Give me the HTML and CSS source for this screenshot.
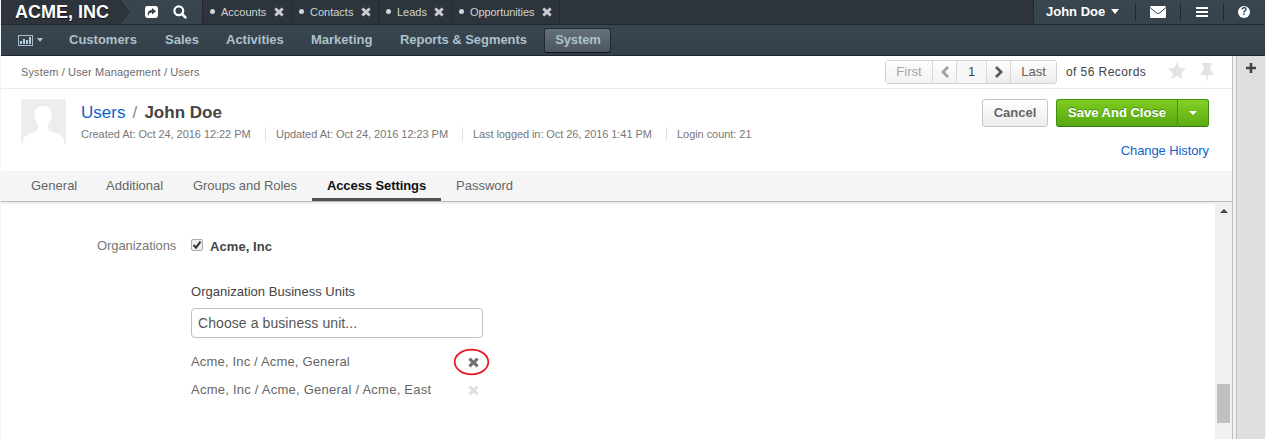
FILE: index.html
```html
<!DOCTYPE html>
<html lang="en">
<head>
<meta charset="utf-8">
<title>John Doe - Users</title>
<link rel="stylesheet" href="styles.css">
</head>
<body>
<svg class="defs" width="0" height="0">
  <symbol id="cross" viewBox="0 0 10 10"><path d="M2.3 0.4 5 3.1 7.7 0.4 9.7 2.4 7.1 5 9.7 7.6 7.7 9.6 5 6.9 2.3 9.6 0.3 7.6 2.9 5 0.3 2.4z" fill="currentColor"/></symbol>
</svg>
<div class="page">
  <header class="topbar">
    <div class="logo"><span>ACME, INC</span><svg class="logo-arrow" width="12" height="24" viewBox="0 0 12 24"><path d="M0 0H1L10 12 1 24H0z" fill="#2d343c"/><path d="M1 0 10 12 1 24" fill="none" stroke="#262d35"/></svg></div>
    <div class="tools">
      <svg class="share" width="13" height="12" viewBox="0 0 13 12"><rect width="13" height="12" rx="2.4" fill="#fff"/><path d="M3.2 10C1.8 6.2 4 4 7 4V2L11 5.3 7 8.4V6.4C5 6.4 3.6 7.4 3.2 10z" fill="#36424c"/></svg>
      <svg class="search" width="14" height="14" viewBox="0 0 14 14"><circle cx="5.8" cy="5.8" r="4.4" fill="none" stroke="#fff" stroke-width="2.2"/><path d="M9 9l3.4 3.4" stroke="#fff" stroke-width="2.6" stroke-linecap="round"/></svg>
    </div>
    <nav class="pins">
      <div class="pin pin-accounts"><i class="dot"></i><span>Accounts</span><svg width="10" height="10"><use href="#cross"/></svg></div>
      <div class="pin pin-contacts"><i class="dot"></i><span>Contacts</span><svg width="10" height="10"><use href="#cross"/></svg></div>
      <div class="pin pin-leads"><i class="dot"></i><span>Leads</span><svg width="10" height="10"><use href="#cross"/></svg></div>
      <div class="pin pin-opps"><i class="dot"></i><span>Opportunities</span><svg width="10" height="10"><use href="#cross"/></svg></div>
    </nav>
    <div class="user">
      <div class="user-name">John Doe<i class="caret"></i></div>
      <div class="user-tool mail"><svg width="16" height="12" viewBox="0 0 16 12"><rect width="16" height="12" rx="1" fill="#fff"/><path d="M0 1.5 6.5 7Q8 8 9.5 7L16 1.5" fill="none" stroke="#36424c"/></svg></div>
      <div class="user-tool menu"><svg width="12" height="10" viewBox="0 0 12 10"><path d="M0 1H12M0 5H12M0 9H12" stroke="#fff" stroke-width="2"/></svg></div>
      <div class="user-tool help"><i>?</i></div>
    </div>
  </header>

  <nav class="mainnav">
    <a class="dash"><svg width="15" height="11" viewBox="0 0 15 11"><rect x=".5" y=".5" width="14" height="10" fill="none" stroke="#adbac8"/><path d="M2 9V6h2v3zM5 9V4h2v5zM8 9V5h2v4zM11 9V2h2v7z" fill="#b5cfe0"/></svg><i class="caret"></i></a>
    <a class="n1">Customers</a><a class="n2">Sales</a><a class="n3">Activities</a><a class="n4">Marketing</a><a class="n5">Reports &amp; Segments</a><a class="active">System</a>
  </nav>

  <div class="body">
    <main class="main">
      <div class="crumbs">
        <div class="path">System / User Management / Users</div>
        <div class="pager">
          <span class="off first">First</span><span class="off step"><svg width="10" height="12" viewBox="0 0 10 12"><path d="M8 1 3 6l5 5" fill="none" stroke="#a0a0a0" stroke-width="2.8"/></svg></span><span class="current">1</span><span class="step"><svg width="10" height="12" viewBox="0 0 10 12"><path d="M2 1 7 6l-5 5" fill="none" stroke="#5a5a5a" stroke-width="2.8"/></svg></span><span class="last">Last</span>
        </div>
        <div class="records">of 56 Records</div>
        <svg class="star" width="18" height="18" viewBox="0 0 18 18"><path d="M9 0 11.6 6 18 6.6 13.2 10.9 14.6 17.2 9 13.9 3.4 17.2 4.8 10.9 0 6.6 6.4 6z" fill="#e4e4e4"/></svg>
        <svg class="thumb" width="14" height="18" viewBox="0 0 14 18"><path d="M2 0H12V2.4H10.500V8C12 8.500 13 10 13 12H8L7.200 18H6.800L6 12H1C1 10 2 8.500 3.500 8V2.400H2z" fill="#e3e3e3"/></svg>
      </div>

      <section class="head">
        <svg class="avatar" width="45" height="45" viewBox="0 0 45 45"><path d="M0 2Q0 0 2 0H43Q45 0 45 2V43Q45 45 43 45H2Q0 45 0 43z" fill="#ededed"/><path d="M22 7c5.500 0 8.500 3 8.300 8.500 1 .8.700 4-.8 5-.5 3-1.500 4-2.500 5.500v3c0 2 2 3 6 4.500 6 2 10 4.500 10 8.500v3H2v-3c0-4 3-6 10-8.500 4-1.500 5-2.500 5-4.500v-3c-1-1.500-2-2.500-2.300-5.500-1.700-1-1.900-4.200-.9-5C13.500 10 16.500 7 22 7z" fill="#fff"/></svg>
        <div class="info">
          <h1><a>Users</a><span class="slash">/</span><b>John Doe</b></h1>
          <ul class="meta"><li class="created">Created At: Oct 24, 2016 12:22 PM</li><li class="updated">Updated At: Oct 24, 2016 12:23 PM</li><li class="logged">Last logged in: Oct 26, 2016 1:41 PM</li><li>Login count: 21</li></ul>
        </div>
        <div class="actions">
          <div class="buttons"><span class="cancel">Cancel</span><span class="save">Save And Close</span><span class="save-more"><i class="caret"></i></span></div>
          <a class="history">Change History</a>
        </div>
      </section>

      <nav class="tabs"><a class="t1">General</a><a class="t2">Additional</a><a class="t3">Groups and Roles</a><a class="t4">Access Settings</a><a class="t5">Password</a></nav>

      <div class="scroll">
        <div class="form">
          <div class="label">Organizations</div>
          <div class="fields">
            <div class="org"><span class="check"><svg width="10" height="10" viewBox="0 0 10 10"><path d="M1.500 5 4 7.600 8.500 1.600" fill="none" stroke="#333" stroke-width="2"/></svg></span><b>Acme, Inc</b></div>
            <div class="units-label">Organization Business Units</div>
            <div class="select">Choose a business unit...</div>
            <div class="unit"><span class="u1">Acme, Inc / Acme, General</span><svg class="cross" width="11" height="11"><use href="#cross"/></svg>
              <svg class="ring" width="37" height="28" viewBox="0 0 37 28"><ellipse cx="18.500" cy="14" rx="16.800" ry="12.300" fill="none" stroke="#e8141e" stroke-width="1.700"/></svg></div>
            <div class="unit"><span class="u2">Acme, Inc / Acme, General / Acme, East</span><svg class="cross faint" width="11" height="11"><use href="#cross"/></svg></div>
          </div>
        </div>
        <div class="scrollbar"><i class="up"></i><i class="handle"></i></div>
      </div>
    </main>
    <aside class="side"><svg width="10" height="10" viewBox="0 0 10 10"><path d="M5 0V10M0 5H10" stroke="#444" stroke-width="2.600"/></svg></aside>
  </div>
</div>
</body>
</html>
```
FILE: styles.css
```css
* { box-sizing: border-box; }
body { margin: 0; background: #f5f5f5; font: 13px/20px "Liberation Sans", Arial, sans-serif; color: #444; overflow: hidden; }
.defs { position: absolute; }
svg { display: block; flex: none; }
i { font-style: normal; display: block; flex: none; }
.page { width: 1264px; height: 439px; margin-left: 1px; background: #fff; display: flex; flex-direction: column; white-space: nowrap; }
.caret { width: 0; height: 0; border: 4px solid transparent; border-top-color: currentColor; border-bottom: 0; }

.topbar { height: 25px; flex: none; display: flex; background: #2d343c; border-bottom: 1px solid #1f272f; }
.logo { width: 130px; display: flex; background: linear-gradient(#39454e, #36424c); color: #fff; font: bold 18px/24px "Liberation Sans", Arial, sans-serif; }
.logo span { width: 118px; padding-left: 14px; background: #2d343c; text-shadow: 0 1px 1px #111; }
.tools { width: 72px; background: linear-gradient(#3a464f, #36424c); border-right: 1px solid #20272e; display: flex; }
.share { margin: 6px 0 0 14px; }
.search { margin: 5px 0 0 15px; }
.pins { flex: 1; display: flex; }
.pin { display: flex; padding-left: 7px; border-right: 1px solid #232a31; color: #d0d4d8; font-size: 11px; line-height: 24px; }
.pin .dot { width: 5px; height: 5px; border-radius: 50%; background: #d0d4d8; margin: 9px 6px 0 0; }
.pin svg { margin-top: 7px; color: #c9cdd1; }
.pin-accounts { width: 89px; }
.pin-contacts { width: 87px; }
.pin-leads { width: 73px; }
.pin-opps { width: 108px; }
.pin-accounts span { width: 53px; }
.pin-contacts span { width: 51px; }
.pin-leads span { width: 37px; }
.pin-opps span { width: 72px; letter-spacing: -.08px; }
.user { width: 232px; display: flex; align-items: center; background: linear-gradient(#3a464f, #36424c); border-left: 1px solid #20272e; color: #fff; }
.user-name { width: 101px; padding-left: 12px; font-weight: bold; display: flex; align-items: center; }
.user-name .caret { border-width: 5px 4.5px 0; margin: 0 0 1px 6px; }
.user-tool { height: 16px; border-left: 1px solid #20272e; display: flex; align-items: center; }
.mail { width: 45px; padding-left: 14px; }
.menu { width: 43px; padding-left: 15px; }
.help { width: 42px; padding-left: 14px; }
.help i { width: 12px; height: 12px; border-radius: 50%; background: #fff; color: #303b44; font: bold 10px/12px "Liberation Sans", Arial, sans-serif; text-align: center; }

.mainnav { height: 31px; flex: none; display: flex; align-items: center; background: linear-gradient(#3a464f, #333f49); border-bottom: 1px solid #1f2630; color: #adc0cc; font-weight: bold; }
.dash { display: flex; align-items: center; width: 68px; padding-left: 17px; }
.dash .caret { margin-left: 4px; border-width: 4px 3.5px 0; }
.n1 { width: 96px; }
.n2 { width: 61px; }
.n3 { width: 85px; }
.n4 { width: 89px; }
.n5 { width: 144px; letter-spacing: -.05px; }
.mainnav .active { width: 67px; height: 25px; line-height: 22px; text-align: center; border: 1px solid #20272e; border-bottom-color: #111; border-radius: 3px; background: linear-gradient(#66717d, #4b555f); letter-spacing: -.1px; padding-left: 1px; }

.body { flex: 1; display: flex; min-height: 0; }
.main { width: 1232px; border-right: 1px solid #bfbfbf; display: flex; flex-direction: column; }
.crumbs { height: 33px; flex: none; display: flex; border-bottom: 1px solid #ececec; }
.path { width: 864px; padding-left: 20px; font-size: 11px; line-height: 33px; color: #6c6c6c; letter-spacing: .14px; }
.pager { display: flex; width: 172px; height: 24px; margin: 4px 0 0 20px; border: 1px solid #d4d4d4; border-radius: 3px; background: linear-gradient(#fdfdfd, #ededed); line-height: 22px; text-align: center; color: #606060; }
.pager span { border-right: 1px solid #d8d8d8; display: flex; align-items: center; justify-content: center; }
.pager .off { color: #a5a5a5; background: linear-gradient(#fdfdfd, #f3f3f3); }
.pager .first { width: 47px; }
.pager .step { width: 24px; }
.pager .current { width: 30px; background: #f7f7f7; color: #444; }
.pager .last { width: 45px; border: 0; }
.records { width: 103px; padding-left: 9px; line-height: 32px; font-size: 12px; letter-spacing: .42px; }
.star { margin: 6px 0 0 8px; }
.thumb { margin: 7px 0 0 14px; }

.head { height: 82px; flex: none; display: flex; }
.avatar { margin: 10px 0 0 20px; }
.info { padding-left: 15px; flex: 1; }
h1 { margin: 13px 0 0; font-size: 17px; font-weight: normal; line-height: 21px; display: flex; }
h1 a, .history { color: #1063c9; }
.slash { color: #888; width: 19px; text-align: center; }
.meta { list-style: none; margin: 4px 0 0; padding: 0; display: flex; font-size: 11px; line-height: 14px; color: #777; letter-spacing: -.05px; }
.meta li { margin-right: 10px; border-right: 1px solid #e0e0e0; }
.meta .created { width: 185px; }
.meta .updated { width: 187px; }
.meta .logged { width: 194px; letter-spacing: -.08px; }
.meta li:last-child { border: 0; }
.actions { width: 252px; padding: 10px 23px 0 0; display: flex; flex-direction: column; align-items: flex-end; }
.buttons { display: flex; height: 28px; line-height: 26px; font-weight: bold; text-align: center; }
.cancel { width: 66px; margin-right: 8px; border: 1px solid #c4c4c4; border-radius: 3px; background: linear-gradient(#fff, #ececec); color: #666; }
.save { width: 122px; color: #fff; text-shadow: 0 -1px #458b16; border: 1px solid #40910f; border-bottom-color: #2d7a08; border-radius: 3px 0 0 3px; background: linear-gradient(#7fcb20, #57a811); }
.save-more { width: 31px; display: flex; align-items: center; justify-content: center; color: #fff; border: 1px solid #40910f; border-left: 0; border-bottom-color: #2d7a08; border-radius: 0 3px 3px 0; background: linear-gradient(#86d025, #5cad13); }
.history { margin-top: 14px; line-height: 20px; letter-spacing: -.1px; }

.tabs { height: 31px; flex: none; display: flex; background: #f5f5f5; border-bottom: 1px solid #b8b8b8; line-height: 29px; color: #666; }
.t1 { width: 105px; padding-left: 30px; }
.t2 { width: 87px; }
.t3 { width: 119px; letter-spacing: -.06px; }
.t4 { width: 129px; height: 30px; text-align: center; font-weight: bold; color: #111; border-bottom: 3px solid #505050; letter-spacing: -.08px; }
.t5 { padding-left: 15px; }

.scroll { flex: 1; display: flex; border-top: 2px solid #f0f0f0; min-height: 0; }
.form { flex: 1; display: flex; padding-top: 31px; }
.label { width: 190px; padding-left: 96px; color: #777; line-height: 22px; letter-spacing: -.07px; }
.fields { width: 292px; }
.org { display: flex; height: 23px; line-height: 23px; }
.org b { letter-spacing: .08px; }
.check { width: 12px; height: 12px; margin: 4px 7px 0 0; border: 1px solid #aaa; border-radius: 2px; background: #eee; }
.units-label { margin-top: 24px; line-height: 20px; letter-spacing: .03px; }
.select { height: 30px; margin-top: 6px; border: 1px solid #bfbfbf; border-radius: 4px; padding-left: 6px; font-size: 14px; line-height: 28px; color: #555; letter-spacing: .08px; }
.unit { height: 28px; display: flex; justify-content: space-between; align-items: center; color: #666; position: relative; padding-right: 4px; }
.select + .unit { margin-top: 10px; }
.u1 { letter-spacing: .17px; }
.u2 { letter-spacing: .24px; }
.cross { color: #707070; }
.faint { color: #e0e0e0; }
.ring { position: absolute; left: 262px; top: 0; }
.scrollbar { width: 17px; background: #f0f0f0; display: flex; flex-direction: column; align-items: center; }
.up { width: 0; height: 0; margin-top: 5px; border: 4px solid transparent; border-top: 0; border-bottom-color: #444; }
.handle { width: 13px; height: 39px; margin-top: 171px; background: #c0c0c0; }
.side { flex: 1; margin-left: 3px; border-left: 1px solid #bfbfbf; background: #dfdfdf; padding: 7px 0 0 9px; box-shadow: -3px 0 #f0f0f0; }
```
